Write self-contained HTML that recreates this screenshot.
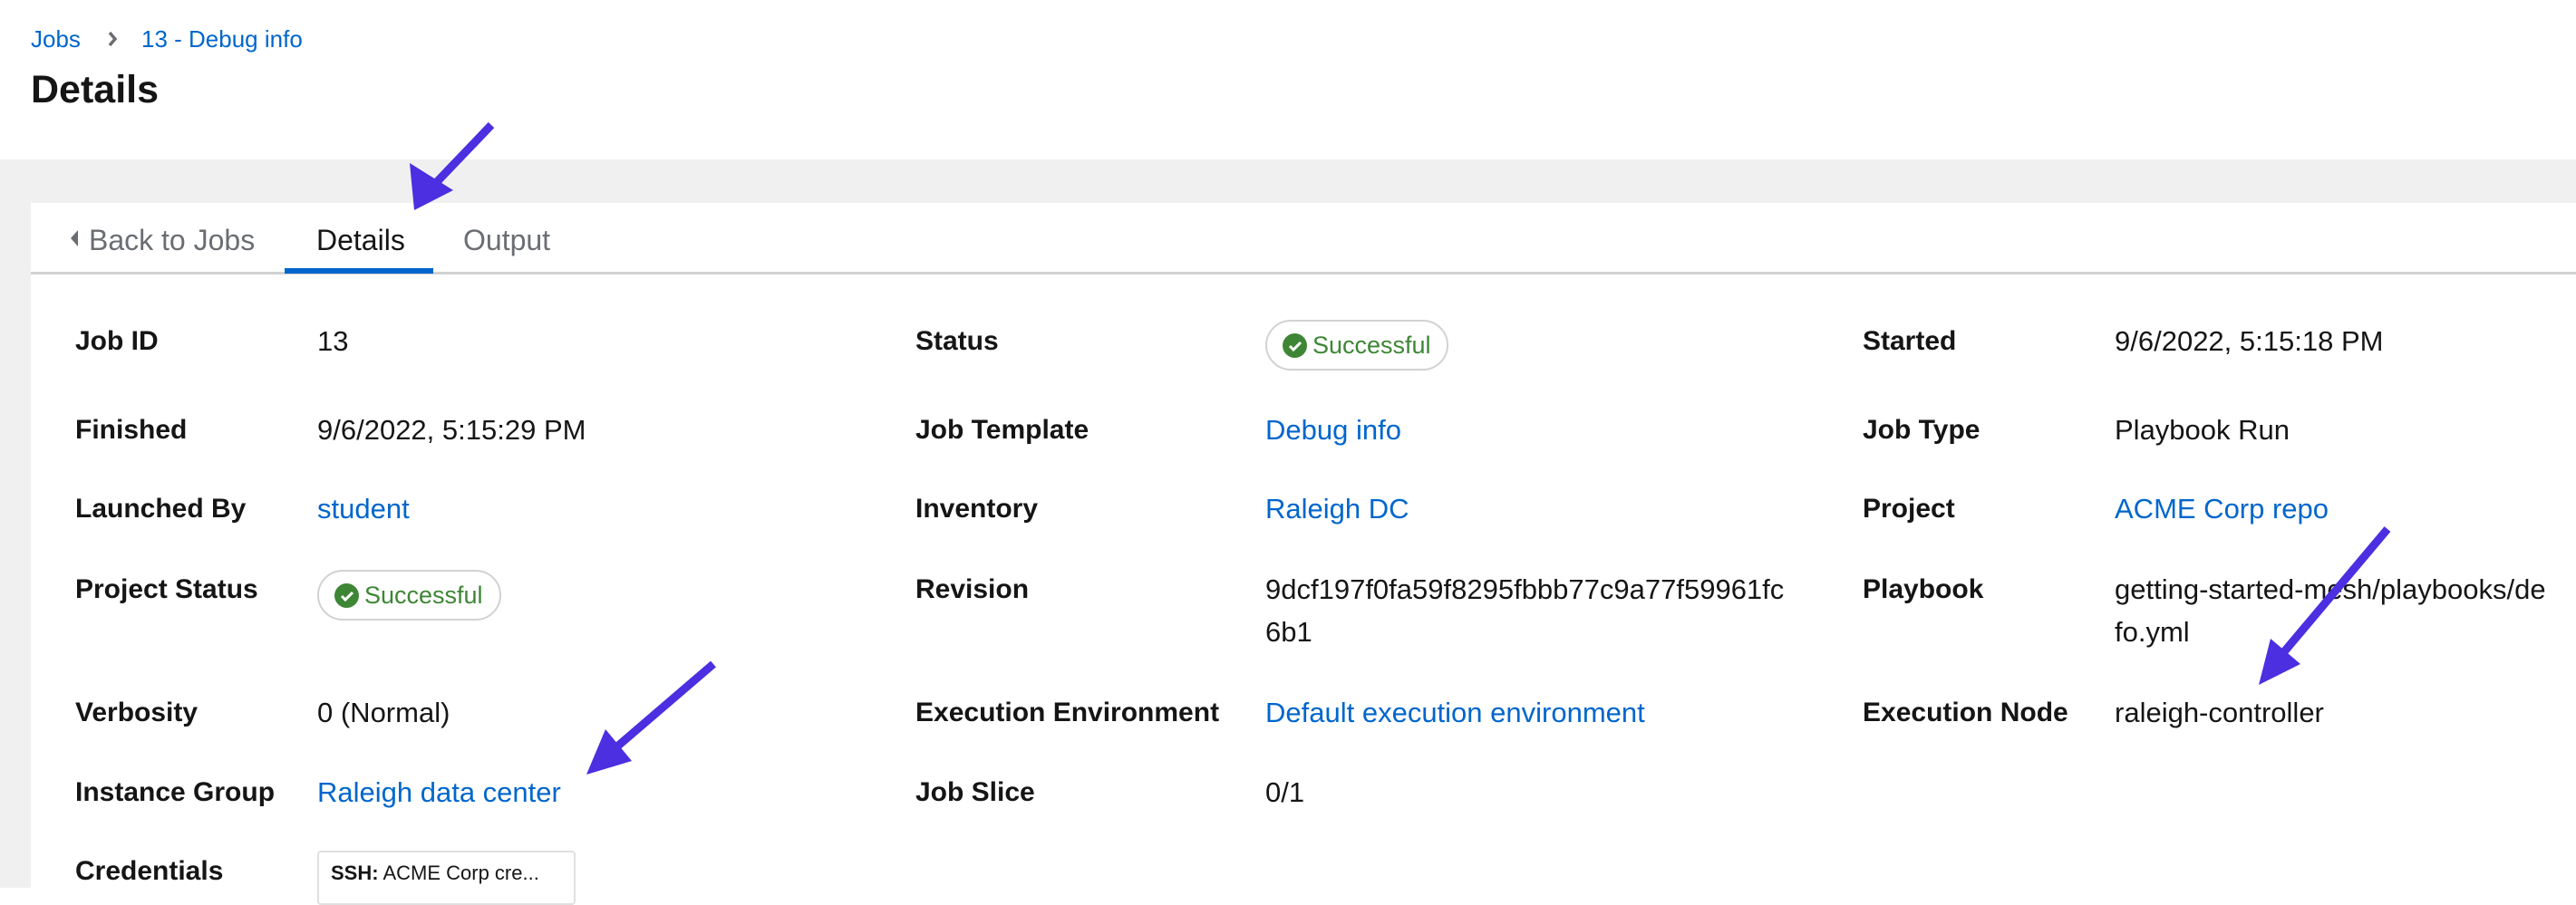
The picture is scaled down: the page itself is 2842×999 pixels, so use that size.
<!DOCTYPE html>
<html><head><meta charset="utf-8"><style>
*{margin:0;padding:0;box-sizing:border-box}
body{width:2842px;height:980px;overflow:hidden;background:#fff;font-family:"Liberation Sans",sans-serif;color:#151515;position:relative}
.a{position:absolute;white-space:nowrap;line-height:40px}
.l{font-size:30px;font-weight:bold}
.v{font-size:31px}
.k{color:#0066cc}
.pill{position:absolute;height:56px;border:2px solid #d2d2d2;border-radius:30px;background:#fff}
.pill .c{position:absolute;left:17px;top:13px;width:27px;height:27px;border-radius:50%;background:#3e8635}
.pill span{position:absolute;left:50px;top:7px;font-size:27px;color:#3e8635;line-height:38px}
</style></head><body>
<div class="a k" style="left:34px;top:23px;font-size:26px">Jobs</div>
<svg style="position:absolute;left:118px;top:34px" width="12" height="18" viewBox="0 0 12 18"><path d="M3 2l6 7-6 7" stroke="#6a6e73" stroke-width="3.5" fill="none"/></svg>
<div class="a k" style="left:156px;top:23px;font-size:26px">13 - Debug info</div>
<div class="a" style="left:34px;top:76px;font-size:43px;font-weight:bold;line-height:46px">Details</div>
<div style="position:absolute;left:0;top:176px;width:2842px;height:804px;background:#f0f0f0"></div>
<div style="position:absolute;left:34px;top:224px;width:2808px;height:756px;background:#fff"></div>
<div style="position:absolute;left:34px;top:300px;width:2808px;height:3px;background:#d2d2d2"></div>
<div style="position:absolute;left:314px;top:296px;width:164px;height:6px;background:#0066cc"></div>
<svg style="position:absolute;left:77px;top:253px" width="10" height="20" viewBox="0 0 10 20"><path d="M9 1L1 10l8 9z" fill="#6a6e73"/></svg>
<div class="a" style="left:98px;top:245px;font-size:32px;color:#6a6e73">Back to Jobs</div>
<div class="a" style="left:349px;top:245px;font-size:32px;color:#151515">Details</div>
<div class="a" style="left:511px;top:245px;font-size:32px;color:#6a6e73">Output</div>

<div class="a l" style="left:83px;top:357px">Job ID</div>
<div class="a v" style="left:350px;top:357px">13</div>
<div class="a l" style="left:1010px;top:357px">Status</div>
<div class="pill" style="left:1396px;top:353px;width:202px"><div class="c"></div><svg style="position:absolute;left:23px;top:21px" width="16" height="12" viewBox="0 0 16 12"><path d="M2 6l4 4 8-8" stroke="#fff" stroke-width="3" fill="none"/></svg><span>Successful</span></div>
<div class="a l" style="left:2055px;top:357px">Started</div>
<div class="a v" style="left:2333px;top:357px">9/6/2022, 5:15:18 PM</div>

<div class="a l" style="left:83px;top:455px">Finished</div>
<div class="a v" style="left:350px;top:455px">9/6/2022, 5:15:29 PM</div>
<div class="a l" style="left:1010px;top:455px">Job Template</div>
<div class="a v k" style="left:1396px;top:455px">Debug info</div>
<div class="a l" style="left:2055px;top:455px">Job Type</div>
<div class="a v" style="left:2333px;top:455px">Playbook Run</div>

<div class="a l" style="left:83px;top:542px">Launched By</div>
<div class="a v k" style="left:350px;top:542px">student</div>
<div class="a l" style="left:1010px;top:542px">Inventory</div>
<div class="a v k" style="left:1396px;top:542px">Raleigh DC</div>
<div class="a l" style="left:2055px;top:542px">Project</div>
<div class="a v k" style="left:2333px;top:542px">ACME Corp repo</div>

<div class="a l" style="left:83px;top:631px">Project Status</div>
<div class="pill" style="left:350px;top:629px;width:203px"><div class="c"></div><svg style="position:absolute;left:23px;top:21px" width="16" height="12" viewBox="0 0 16 12"><path d="M2 6l4 4 8-8" stroke="#fff" stroke-width="3" fill="none"/></svg><span>Successful</span></div>
<div class="a l" style="left:1010px;top:631px">Revision</div>
<div class="a v" style="left:1396px;top:631px">9dcf197f0fa59f8295fbbb77c9a77f59961fc</div>
<div class="a v" style="left:1396px;top:678px">6b1</div>
<div class="a l" style="left:2055px;top:631px">Playbook</div>
<div class="a v" style="left:2333px;top:631px">getting-started-mesh/playbooks/de</div>
<div class="a v" style="left:2333px;top:678px">fo.yml</div>

<div class="a l" style="left:83px;top:767px">Verbosity</div>
<div class="a v" style="left:350px;top:767px">0 (Normal)</div>
<div class="a l" style="left:1010px;top:767px">Execution Environment</div>
<div class="a v k" style="left:1396px;top:767px">Default execution environment</div>
<div class="a l" style="left:2055px;top:767px">Execution Node</div>
<div class="a v" style="left:2333px;top:767px">raleigh-controller</div>

<div class="a l" style="left:83px;top:855px">Instance Group</div>
<div class="a v k" style="left:350px;top:855px">Raleigh data center</div>
<div class="a l" style="left:1010px;top:855px">Job Slice</div>
<div class="a v" style="left:1396px;top:855px">0/1</div>

<div class="a l" style="left:83px;top:942px">Credentials</div>
<div style="position:absolute;left:350px;top:939px;width:285px;height:60px;border:2px solid #e0e0e0;border-radius:4px"></div>
<div class="a" style="left:365px;top:944px;font-size:22px"><b>SSH:</b> ACME Corp cre...</div>

<svg style="position:absolute;left:0;top:0" width="2842" height="980">
<g fill="#4b2fe0" stroke="#4b2fe0">
<line x1="542" y1="138" x2="478" y2="205" stroke-width="9"/>
<polygon points="457,232 452,180 500,210" stroke="none"/>
<line x1="787" y1="733" x2="674" y2="830" stroke-width="9"/>
<polygon points="647,855 668,805 697,840" stroke="none"/>
<line x1="2634" y1="584" x2="2512" y2="729" stroke-width="9"/>
<polygon points="2492,756 2505,705 2538,733" stroke="none"/>
</g></svg>
</body></html>
